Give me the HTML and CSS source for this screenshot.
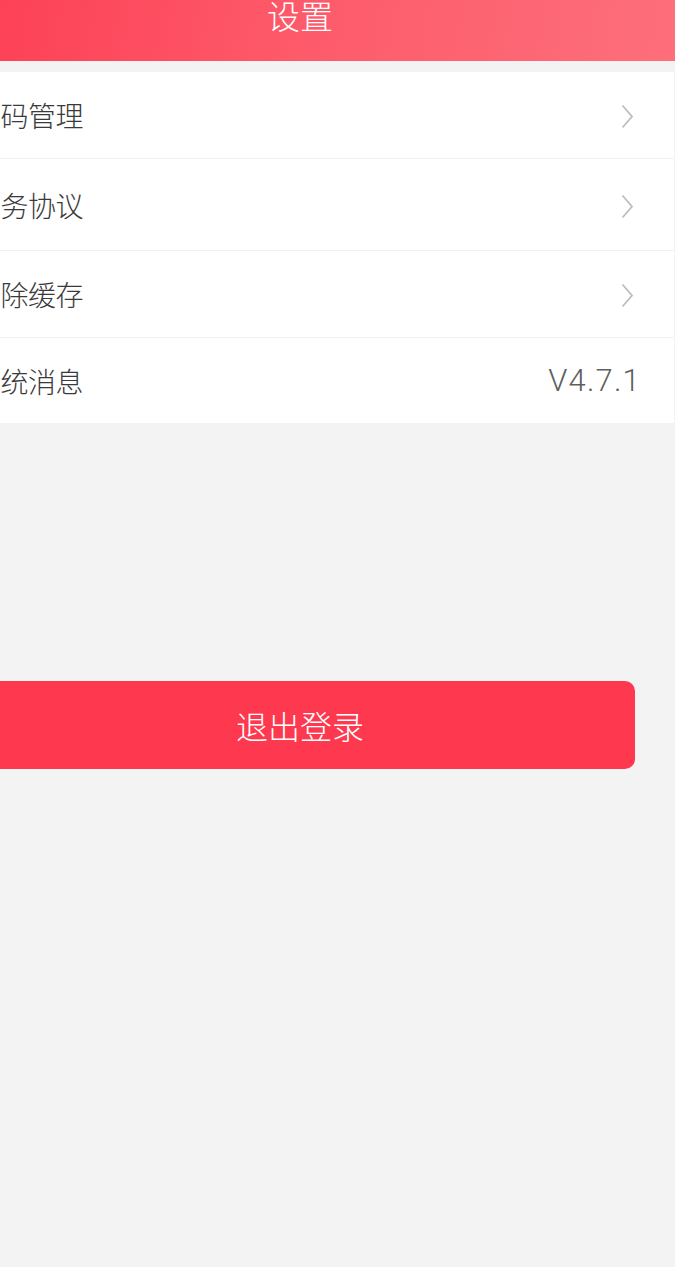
FILE: index.html
```html
<!DOCTYPE html>
<html lang="zh">
<head>
<meta charset="utf-8">
<title>设置</title>
<link rel="stylesheet" href="styles.css">
</head>
<body>
<div class="page">
  <header class="nav"><span class="nav-title">设置</span></header>
  <ul class="list">
    <li class="row"><span class="label">密码管理</span><svg class="chev" width="13" height="25" viewBox="0 0 13 25"><path d="M1.5 1.5 L11 12.5 L1.5 23.5" fill="none" stroke="#bdbdbd" stroke-width="1.8"/></svg></li>
    <li class="row tall"><span class="label">服务协议</span><svg class="chev" width="13" height="25" viewBox="0 0 13 25"><path d="M1.5 1.5 L11 12.5 L1.5 23.5" fill="none" stroke="#bdbdbd" stroke-width="1.8"/></svg></li>
    <li class="row"><span class="label">清除缓存</span><svg class="chev" width="13" height="25" viewBox="0 0 13 25"><path d="M1.5 1.5 L11 12.5 L1.5 23.5" fill="none" stroke="#bdbdbd" stroke-width="1.8"/></svg></li>
    <li class="row last"><span class="label">系统消息</span><span class="version">V4.7.1</span></li>
  </ul>
  <div class="actions"><button class="logout">退出登录</button></div>
</div>
</body>
</html>
```
FILE: styles.css
```css
html, body {
  margin: 0;
  padding: 0;
  background: #f3f3f3;
  overflow: hidden;
}
body {
  width: 675px;
  height: 1267px;
  font-family: "Noto Sans CJK SC", "Noto Sans", sans-serif;
}
.page {
  width: 750px;
  margin-left: -75px;
  margin-top: -27px;
}
.nav {
  height: 88px;
  background: linear-gradient(100deg, #fd3b51 0%, #fd5a6a 50%, #fd6f7b 100%);
  display: flex;
  align-items: center;
  justify-content: center;
}
.nav-title {
  color: #fff;
  font-size: 33px;
  font-weight: 300;
  line-height: 1;
  margin-top: -4px;
}
.list {
  list-style: none;
  margin: 11px 0 0 0;
  padding: 0;
  background: #fff;
  width: 749px;
}
.row {
  height: 86px;
  border-bottom: 1px solid #f1f1f1;
  display: flex;
  align-items: center;
  justify-content: space-between;
  padding: 0 40px 0 48px;
}
.row.tall { height: 91px; }
.row.last { border-bottom: none; height: 85px; padding-right: 33px; }
.label {
  font-size: 28px;
  font-weight: 300;
  color: #3a3a3a;
  letter-spacing: -0.5px;
}
.chev { display: block; margin-top: 3px; }
.version {
  font-family: Roboto, "Liberation Sans", sans-serif;
  font-weight: 300;
  font-size: 31px;
  color: #5f5f5f;
  letter-spacing: 1.2px;
}
.actions {
  padding: 258px 40px 0 40px;
}
.logout {
  display: block;
  width: 100%;
  height: 88px;
  border: none;
  border-radius: 10px;
  background: #fd384f;
  color: #fff;
  font-family: "Noto Sans CJK SC", sans-serif;
  font-weight: 300;
  font-size: 32px;
  padding: 0;
}
```
